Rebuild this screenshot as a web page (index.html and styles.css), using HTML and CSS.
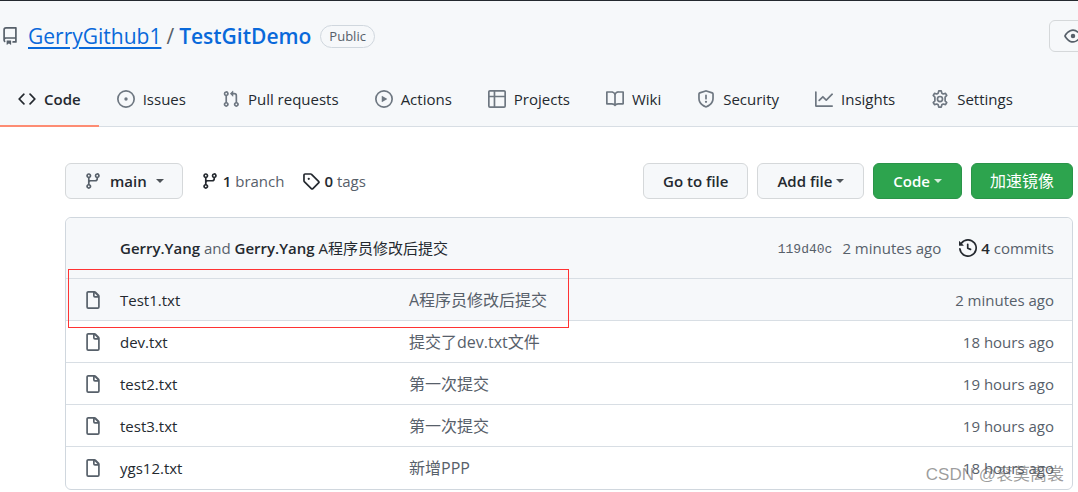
FILE: index.html
```html
<!DOCTYPE html>
<html lang="en">
<head>
<meta charset="utf-8">
<title>GerryGithub1/TestGitDemo</title>
<link rel="stylesheet" href="styles.css">
</head>
<body>
<svg class="sprite" aria-hidden="true">
  <symbol id="branch" viewBox="0 0 16 16"><path fill-rule="evenodd" d="M11.75 2.5a.75.75 0 100 1.5.75.75 0 000-1.5zm-2.25.75a2.25 2.25 0 113 2.122V6A2.5 2.5 0 0110 8.500H6a1 1 0 00-1 1v1.128a2.251 2.251 0 11-1.500 0V5.372a2.250 2.250 0 111.500 0v1.836A2.492 2.492 0 016 7h4a1 1 0 001-1v-.628A2.250 2.250 0 019.500 3.250zM4.250 12a.75.75 0 100 1.500.75.75 0 000-1.500zM3.500 3.250a.75.75 0 111.500 0 .75.75 0 01-1.500 0z"/></symbol>
  <symbol id="file" viewBox="0 0 16 16"><path fill-rule="evenodd" d="M3.75 1.500a.25.25 0 00-.25.25v12.500c0 .138.112.25.25.25h8.500a.25.25 0 00.25-.25V6H9.750A1.750 1.750 0 018 4.250V1.500H3.750zm5.750.562V4.250c0 .138.112.25.25.25h2.188a.25.25 0 00-.011-.013l-2.414-2.414a.25.25 0 00-.013-.011zM2 1.750C2 .784 2.784 0 3.750 0h5.586c.464 0 .909.184 1.237.513l2.914 2.914c.329.328.513.773.513 1.237v9.586A1.750 1.750 0 0112.250 16h-8.500A1.750 1.750 0 012 14.250V1.750z"/></symbol>
</svg>
<header class="repo-header">
  <div class="title-row">
    <svg class="icon repo-icon" viewBox="0 0 16 16" aria-hidden="true"><path fill-rule="evenodd" d="M2 2.500A2.500 2.500 0 014.500 0h8.750a.75.75 0 01.75.75v12.500a.75.75 0 01-.75.75h-2.500a.75.75 0 110-1.500h1.750v-2h-8a1 1 0 00-.714 1.700.75.75 0 01-1.072 1.050A2.495 2.495 0 012 11.500v-9zm10.500-1V9h-8c-.356 0-.694.074-1 .208V2.500a1 1 0 011-1h8zM5 12.250v3.250a.25.25 0 00.4.2l1.450-1.087a.25.25 0 01.3 0L8.600 15.700a.25.25 0 00.4-.2v-3.250a.25.25 0 00-.25-.25h-3.500a.25.25 0 00-.25.25z"/></svg>
    <h1 class="repo-name"><a class="owner" href="#">GerryGithub1</a><span class="slash">/</span><a class="repo" href="#">TestGitDemo</a></h1>
    <span class="badge">Public</span>
    <button class="watch" type="button" aria-label="Watch"><svg class="icon" viewBox="0 0 16 16" aria-hidden="true"><path fill-rule="evenodd" d="M1.679 7.932c.412-.621 1.242-1.750 2.366-2.717C5.175 4.242 6.527 3.500 8 3.500c1.473 0 2.824.742 3.955 1.715 1.124.967 1.954 2.096 2.366 2.717a.119.119 0 010 .136c-.412.621-1.242 1.750-2.366 2.717C10.825 11.758 9.473 12.500 8 12.500c-1.473 0-2.824-.742-3.955-1.715C2.920 9.818 2.090 8.690 1.679 8.068a.119.119 0 010-.136zM8 2c-1.981 0-3.670.992-4.933 2.078C1.797 5.169.88 6.423.43 7.100a1.619 1.619 0 000 1.798c.45.678 1.367 1.932 2.637 3.024C4.329 13.008 6.019 14 8 14c1.981 0 3.670-.992 4.933-2.078 1.270-1.091 2.187-2.345 2.637-3.023a1.619 1.619 0 000-1.798c-.45-.678-1.367-1.932-2.637-3.023C11.671 2.992 9.981 2 8 2zm0 8a2 2 0 100-4 2 2 0 000 4z"/></svg></button>
  </div>
  <nav class="tabs">
    <a class="tab current" href="#"><svg class="icon" viewBox="0 0 16 16" aria-hidden="true"><path fill-rule="evenodd" d="M4.720 3.220a.75.75 0 011.060 1.060L2.060 8l3.720 3.720a.75.75 0 11-1.060 1.060L.47 8.530a.75.75 0 010-1.060l4.250-4.250zm6.560 0a.75.75 0 10-1.060 1.060L13.940 8l-3.720 3.720a.75.75 0 101.060 1.060l4.250-4.250a.75.75 0 000-1.060l-4.250-4.250z"/></svg>Code</a>
    <a class="tab" href="#"><svg class="icon" viewBox="0 0 16 16" aria-hidden="true"><path d="M8 9.500a1.500 1.500 0 100-3 1.500 1.500 0 000 3z"/><path fill-rule="evenodd" d="M8 0a8 8 0 100 16A8 8 0 008 0zM1.500 8a6.500 6.500 0 1113 0 6.500 6.500 0 01-13 0z"/></svg>Issues</a>
    <a class="tab" href="#"><svg class="icon" viewBox="0 0 16 16" aria-hidden="true"><path fill-rule="evenodd" d="M7.177 3.073L9.573.677A.25.25 0 0110 .854v4.792a.25.25 0 01-.427.177L7.177 3.427a.25.25 0 010-.354zM3.750 2.500a.75.75 0 100 1.500.75.75 0 000-1.500zm-2.250.75a2.250 2.250 0 113 2.122v5.256a2.251 2.251 0 11-1.500 0V5.372A2.250 2.250 0 011.500 3.250zM11 2.500h-1V4h1a1 1 0 011 1v5.628a2.251 2.251 0 101.500 0V5A2.500 2.500 0 0011 2.500zm1 10.250a.75.75 0 111.500 0 .75.75 0 01-1.500 0zM3.750 12a.75.75 0 100 1.500.75.75 0 000-1.500z"/></svg>Pull requests</a>
    <a class="tab" href="#"><svg class="icon" viewBox="0 0 16 16" aria-hidden="true"><path fill-rule="evenodd" d="M1.500 8a6.500 6.500 0 1113 0 6.500 6.500 0 01-13 0zM8 0a8 8 0 100 16A8 8 0 008 0zM6.379 5.227A.25.25 0 006 5.442v5.117a.25.25 0 00.379.214l4.264-2.559a.25.25 0 000-.428L6.379 5.227z"/></svg>Actions</a>
    <a class="tab" href="#"><svg class="icon" viewBox="0 0 16 16" aria-hidden="true"><path fill-rule="evenodd" d="M0 1.750C0 .784.784 0 1.750 0h12.500C15.216 0 16 .784 16 1.750v12.500A1.750 1.750 0 0114.250 16H1.750A1.750 1.750 0 010 14.250V1.750zM1.500 6.500v7.750c0 .138.112.25.25.25H5v-8H1.500zM5 5H1.500V1.750a.25.25 0 01.25-.25H5V5zm1.500 1.500v8h7.750a.25.25 0 00.25-.25V6.500h-8zm8-1.500h-8V1.500h7.750a.25.25 0 01.25.25V5z"/></svg>Projects</a>
    <a class="tab" href="#"><svg class="icon" viewBox="0 0 16 16" aria-hidden="true"><path fill-rule="evenodd" d="M0 1.750A.75.75 0 01.75 1h4.253c1.227 0 2.317.59 3 1.501A3.744 3.744 0 0111.006 1h4.245a.75.75 0 01.75.75v10.500a.75.75 0 01-.75.75h-4.507a2.250 2.250 0 00-1.591.659l-.622.621a.75.75 0 01-1.060 0l-.622-.621A2.250 2.250 0 005.258 13H.75a.75.75 0 01-.75-.75V1.750zm8.755 3a2.250 2.250 0 012.250-2.250H14.500v9h-3.757c-.71 0-1.400.201-1.992.572l.004-7.322zm-1.504 7.324l.004-5.073-.002-2.253A2.250 2.250 0 005.003 2.500H1.500v9h3.757a3.750 3.750 0 011.994.574z"/></svg>Wiki</a>
    <a class="tab" href="#"><svg class="icon" viewBox="0 0 16 16" aria-hidden="true"><path fill-rule="evenodd" d="M7.467.133a1.750 1.750 0 011.066 0l5.250 1.680A1.750 1.750 0 0115 3.480V7c0 1.566-.32 3.182-1.303 4.682-.983 1.498-2.585 2.813-5.032 3.855a1.700 1.700 0 01-1.330 0c-2.447-1.042-4.049-2.357-5.032-3.855C1.320 10.182 1 8.566 1 7V3.480a1.750 1.750 0 011.217-1.667l5.250-1.680zm.61 1.429a.25.25 0 00-.153 0l-5.250 1.680a.25.25 0 00-.174.238V7c0 1.358.275 2.666 1.057 3.860.784 1.194 2.121 2.340 4.366 3.297a.2.2 0 00.154 0c2.245-.956 3.582-2.104 4.366-3.298C13.225 9.666 13.500 8.360 13.500 7V3.480a.25.25 0 00-.174-.237l-5.250-1.680zM9 10.500a1 1 0 11-2 0 1 1 0 012 0zm-.25-5.750a.75.75 0 10-1.500 0v3a.75.75 0 001.500 0v-3z"/></svg>Security</a>
    <a class="tab" href="#"><svg class="icon" viewBox="0 0 16 16" aria-hidden="true"><path fill-rule="evenodd" d="M1.500 1.750a.75.75 0 00-1.500 0v12.500c0 .414.336.75.75.75h14.500a.75.75 0 000-1.500H1.500V1.750zm14.280 2.530a.75.75 0 00-1.060-1.060L10 7.940 7.530 5.470a.75.75 0 00-1.060 0L3.220 8.720a.75.75 0 001.060 1.060L7 7.060l2.470 2.470a.75.75 0 001.060 0l5.250-5.250z"/></svg>Insights</a>
    <a class="tab" href="#"><svg class="icon" viewBox="0 0 16 16" aria-hidden="true"><g fill="none" stroke="currentColor" stroke-width="1.500" stroke-linejoin="round"><circle cx="8" cy="8" r="2.250"/><path d="M6.900.8h2.200l.5 2 1.300.75 2-.6 1.100 1.900-1.450 1.450v3.400L14 11.150l-1.100 1.900-2-.6-1.300.75-.5 2H6.900l-.5-2-1.300-.75-2 .6L2 11.150 3.450 9.700V6.300L2 4.850l1.100-1.900 2 .6 1.300-.75z"/></g></svg>Settings</a>
  </nav>
</header>
<main class="content">
  <div class="toolbar">
    <button class="btn branch-btn" type="button"><svg class="icon" aria-hidden="true"><use href="#branch"/></svg>main<span class="caret"></span></button>
    <a class="stat" href="#"><svg class="icon" aria-hidden="true"><use href="#branch"/></svg><span><strong>1</strong> branch</span></a>
    <a class="stat" href="#"><svg class="icon" viewBox="0 0 16 16" aria-hidden="true"><path fill-rule="evenodd" d="M2.500 7.775V2.750a.25.25 0 01.25-.25h5.025a.25.25 0 01.177.073l6.250 6.250a.25.25 0 010 .354l-5.025 5.025a.25.25 0 01-.354 0l-6.250-6.250a.25.25 0 01-.073-.177zm-1.500 0V2.750C1 1.784 1.784 1 2.750 1h5.025c.464 0 .91.184 1.238.513l6.250 6.250a1.750 1.750 0 010 2.474l-5.026 5.026a1.750 1.750 0 01-2.474 0l-6.250-6.250A1.750 1.750 0 011 7.775zM6 5a1 1 0 100 2 1 1 0 000-2z"/></svg><span><strong>0</strong> tags</span></a>
    <div class="actions">
      <button class="btn" type="button">Go to file</button>
      <button class="btn" type="button">Add file<span class="caret"></span></button>
      <button class="btn primary" type="button">Code<span class="caret"></span></button>
      <button class="btn primary mirror" type="button">加速镜像</button>
    </div>
  </div>
  <section class="files">
    <div class="commit">
      <p class="message"><strong>Gerry.Yang</strong> and <strong>Gerry.Yang</strong> <a href="#">A程序员修改后提交</a></p>
      <a class="sha" href="#">119d40c</a>
      <span class="when">2 minutes ago</span>
      <a class="stat" href="#"><svg class="icon" viewBox="0 0 16 16" aria-hidden="true"><path fill-rule="evenodd" d="M1.643 3.143L.427 1.927A.25.25 0 000 2.104V5.750c0 .138.112.25.25.25h3.646a.25.25 0 00.177-.427L2.715 4.215a6.500 6.500 0 11-1.180 4.458.75.75 0 10-1.493.154 8.001 8.001 0 101.600-5.684zM7.750 4a.75.75 0 01.75.75v2.992l2.028.812a.75.75 0 01-.557 1.392l-2.500-1A.75.75 0 017 8.250v-3.500A.75.75 0 017.750 4z"/></svg><span><strong>4</strong> commits</span></a>
    </div>
    <table class="file-table">
      <tbody>
        <tr class="active"><td class="type"><svg class="icon" aria-hidden="true"><use href="#file"/></svg></td><td class="name"><a href="#">Test1.txt</a></td><td class="note"><a href="#">A程序员修改后提交</a></td><td class="age">2 minutes ago</td></tr>
        <tr><td class="type"><svg class="icon" aria-hidden="true"><use href="#file"/></svg></td><td class="name"><a href="#">dev.txt</a></td><td class="note"><a href="#">提交了dev.txt文件</a></td><td class="age">18 hours ago</td></tr>
        <tr><td class="type"><svg class="icon" aria-hidden="true"><use href="#file"/></svg></td><td class="name"><a href="#">test2.txt</a></td><td class="note"><a href="#">第一次提交</a></td><td class="age">19 hours ago</td></tr>
        <tr><td class="type"><svg class="icon" aria-hidden="true"><use href="#file"/></svg></td><td class="name"><a href="#">test3.txt</a></td><td class="note"><a href="#">第一次提交</a></td><td class="age">19 hours ago</td></tr>
        <tr><td class="type"><svg class="icon" aria-hidden="true"><use href="#file"/></svg></td><td class="name"><a href="#">ygs12.txt</a></td><td class="note"><a href="#">新增PPP</a></td><td class="age">18 hours ago</td></tr>
      </tbody>
    </table>
    <div class="highlight"></div>
    <span class="watermark">CSDN @衮莫离裳</span>
  </section>
</main>
</body>
</html>
```
FILE: styles.css
```css
* { box-sizing: border-box; }

body {
  margin: 0;
  overflow: hidden;
  background: #fff;
  color: #24292f;
  font: 15px/24px "Open Sans", "Noto Sans CJK SC", sans-serif;
}

a { color: inherit; text-decoration: none; }
strong { font-weight: 600; color: #24292f; }
.sprite { position: absolute; width: 0; height: 0; }
.icon { width: 18px; height: 18px; flex: none; fill: currentColor; }

.repo-header {
  background: #f6f8fa;
  border-top: 1px solid #24292f;
  border-bottom: 1px solid #d8dee4;
}

.title-row {
  display: flex;
  align-items: center;
  height: 72px;
  padding-bottom: 2px;
  overflow: hidden;
}

.repo-icon { margin: 0 9px 0 1px; color: #57606a; }

.repo-name {
  display: flex;
  margin: 0;
  font-size: 21px;
  line-height: 32px;
  font-weight: 400;
  color: #0969da;
}

.owner { text-decoration: underline; text-decoration-thickness: 2px; text-underline-offset: 3px; }
.slash { margin: 0 5px; color: #57606a; }
.repo { font-weight: 600; }

.badge {
  margin-left: 9px;
  padding: 0 8px;
  border: 1px solid #d0d7de;
  border-radius: 12px;
  font-size: 13px;
  line-height: 21px;
  font-weight: 500;
  color: #57606a;
}

.watch {
  display: flex;
  align-items: center;
  flex: none;
  width: 60px;
  height: 32px;
  margin: 0 -31px 0 auto;
  padding: 0 14px;
  border: 1px solid #d5d8da;
  border-radius: 6px;
  background: #f6f8fa;
  color: #57606a;
}

.tabs { display: flex; height: 54px; margin-bottom: -1px; }

.tab {
  display: flex;
  align-items: center;
  gap: 8px;
  padding: 0 18px;
  border-bottom: 2px solid transparent;
  white-space: nowrap;
}

.tab .icon { color: #6e7781; }
.tab.current { border-color: #fd8c73; font-weight: 600; }
.tab.current .icon { color: #24292f; }

.content { padding: 36px 5px 0 65px; }

.toolbar { display: flex; align-items: center; gap: 18px; }

.btn {
  display: flex;
  align-items: center;
  justify-content: center;
  height: 36px;
  padding: 0 19px;
  border: 1px solid #d5d8da;
  border-radius: 6px;
  background: #f6f8fa;
  color: #24292f;
  font: inherit;
  font-weight: 600;
  white-space: nowrap;
}

.branch-btn { padding: 0 18px; }
.branch-btn .icon { margin-right: 8px; color: #57606a; }
.branch-btn .caret { margin-left: 9px; }

.caret {
  margin-left: 4px;
  border: 4px solid transparent;
  border-top-color: currentColor;
  border-bottom: 0;
  opacity: 0.8;
}

.primary { background: #2da44e; border-color: #2a9449; color: #fff; }
.mirror { padding: 0 18px; font-size: 16px; font-weight: 400; }

.actions { display: flex; gap: 9px; margin-left: auto; }

.stat { display: flex; align-items: center; gap: 4px; color: #57606a; white-space: nowrap; }
.stat .icon { color: #24292f; }

.files {
  position: relative;
  margin-top: 18px;
  border: 1px solid #d0d7de;
  border-radius: 6px;
}

.commit {
  display: flex;
  align-items: center;
  height: 60px;
  padding: 0 18px 0 54px;
  border-radius: 6px 6px 0 0;
  background: #f6f8fa;
  color: #57606a;
}

.message { flex: 1; margin: 0; }
.message a { color: #24292f; }
.sha { margin-right: 10px; padding-top: 4px; font: 13px/24px "Liberation Mono", monospace; }
.when { margin-right: 18px; }

.file-table { width: 100%; border-collapse: collapse; table-layout: fixed; }
.file-table tr { height: 42px; border-top: 1px solid #d8dee4; }
.file-table td { padding: 0; color: #57606a; }
.active { background: #f6f8fa; }
.file-table .type { width: 54px; padding-left: 18px; }
.type .icon { display: block; }
.name { width: 289px; }
.file-table .name { color: #24292f; }
.note { font-size: 16px; }
.file-table .age { width: 160px; padding-right: 18px; text-align: right; }

/* Outline around the newest commit's row */
.highlight {
  position: absolute;
  top: 51px;
  left: 2px;
  width: 501px;
  height: 59px;
  border: 1px solid #f33;
}

.watermark {
  position: absolute;
  right: 8px;
  bottom: 2px;
  font: 17px/24px "Liberation Sans", "Noto Sans CJK SC", sans-serif;
  color: rgba(90, 90, 90, 0.6);
}
```
